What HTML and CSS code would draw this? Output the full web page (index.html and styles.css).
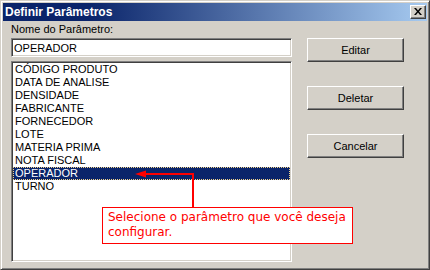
FILE: index.html
```html
<!DOCTYPE html>
<html>
<head>
<meta charset="utf-8">
<link rel="stylesheet" href="styles.css">
</head>
<body>
<div class="window">
  <div class="titlebar">
    <span class="title">Definir Parâmetros</span>
    <span class="close-btn">
      <svg width="8" height="7" viewBox="0 0 8 7"><path d="M0 0h2l2 2.5 2-2.5h2l-3 3.5 3 3.5h-2l-2-2.5-2 2.5h-2l3-3.5z" fill="#000"/></svg>
    </span>
  </div>
  <div class="content">
    <div class="left">
      <div class="label">Nome do Parâmetro:</div>
      <div class="textbox">OPERADOR</div>
      <div class="listbox">
        <div class="item">CÓDIGO PRODUTO</div>
        <div class="item">DATA DE ANALISE</div>
        <div class="item">DENSIDADE</div>
        <div class="item">FABRICANTE</div>
        <div class="item">FORNECEDOR</div>
        <div class="item">LOTE</div>
        <div class="item">MATERIA PRIMA</div>
        <div class="item">NOTA FISCAL</div>
        <div class="item selected">OPERADOR</div>
        <div class="item">TURNO</div>
      </div>
    </div>
    <div class="right">
      <div class="btn">Editar</div>
      <div class="btn">Deletar</div>
      <div class="btn">Cancelar</div>
    </div>
  </div>
  <svg class="pointer" width="66" height="41" viewBox="0 0 66 41">
    <polygon points="5,8 16,4.5 16,11.5" fill="#ff0000"/>
    <path d="M14 8H63V41" fill="none" stroke="#ff0000" stroke-width="2"/>
  </svg>
  <div class="callout">Selecione o parâmetro que você deseja<br>configurar.</div>
</div>
</body>
</html>
```
FILE: styles.css
```css
html, body {
  margin: 0;
  padding: 0;
  background: #d4d0c8;
}
.window {
  position: relative;
  width: 430px;
  height: 270px;
  box-sizing: border-box;
  border: 1px solid;
  border-color: #d4d0c8 #404040 #404040 #d4d0c8;
  box-shadow: inset 1px 1px #ffffff, inset -1px -1px #808080;
  padding: 2px;
  display: flex;
  flex-direction: column;
  background: #d4d0c8;
  font-family: "Liberation Sans", Arial, sans-serif;
  font-size: 11px;
  color: #000;
}
.titlebar {
  height: 18px;
  flex: none;
  background: linear-gradient(to right, #0a246a 0%, #0a246a 20%, #a6caf0 100%);
  display: flex;
  align-items: center;
  justify-content: space-between;
  padding: 0 1px 0 2px;
  color: #fff;
  font-weight: bold;
  font-size: 12px;
}
.title {
  line-height: 18px;
}
.close-btn {
  width: 16px;
  height: 14px;
  box-sizing: border-box;
  background: #d4d0c8;
  border: 1px solid;
  border-color: #ffffff #404040 #404040 #ffffff;
  box-shadow: inset -1px -1px #808080;
  display: flex;
  align-items: center;
  justify-content: center;
  padding: 0 1px 1px 0;
}
.close-btn svg {
  display: block;
}
.content {
  display: grid;
  grid-template-columns: 281px 97px;
  column-gap: 15px;
  padding: 2px 0 0 8px;
}
.label {
  height: 13px;
  line-height: 13px;
  margin-bottom: 2px;
}
.textbox {
  height: 19px;
  box-sizing: border-box;
  background: #fff;
  border: 1px solid;
  border-color: #808080 #ffffff #ffffff #808080;
  box-shadow: inset 1px 1px #404040, inset -1px -1px #d4d0c8;
  padding: 2px 0 0 2px;
  line-height: 14px;
}
.listbox {
  margin-top: 4px;
  height: 201px;
  box-sizing: border-box;
  background: #fff;
  border: 1px solid;
  border-color: #808080 #ffffff #ffffff #808080;
  box-shadow: inset 1px 1px #404040, inset -1px -1px #d4d0c8;
  padding: 1px 1px 0 1px;
}
.item {
  height: 13px;
  line-height: 13px;
  padding-left: 2px;
  white-space: nowrap;
}
.item.selected {
  background: #0a246a;
  color: #fff;
  outline: 1px dotted #f2d48a;
  outline-offset: -1px;
}
.right {
  display: flex;
  flex-direction: column;
  gap: 24px;
  margin-top: 15px;
}
.btn {
  height: 24px;
  box-sizing: border-box;
  border: 1px solid;
  border-color: #ffffff #404040 #404040 #ffffff;
  box-shadow: inset -1px -1px #808080;
  display: flex;
  align-items: center;
  justify-content: center;
  padding-bottom: 1px;
}
.pointer {
  position: absolute;
  left: 129px;
  top: 165px;
}
.callout {
  position: absolute;
  left: 101px;
  top: 206px;
  width: 251px;
  height: 37px;
  box-sizing: border-box;
  background: #fff;
  border: 1px solid #ff0000;
  color: #ff0000;
  font-family: "DejaVu Sans", Verdana, sans-serif;
  font-size: 12px;
  line-height: 15px;
  padding: 2px 5px 0 5px;
  white-space: nowrap;
}
```
